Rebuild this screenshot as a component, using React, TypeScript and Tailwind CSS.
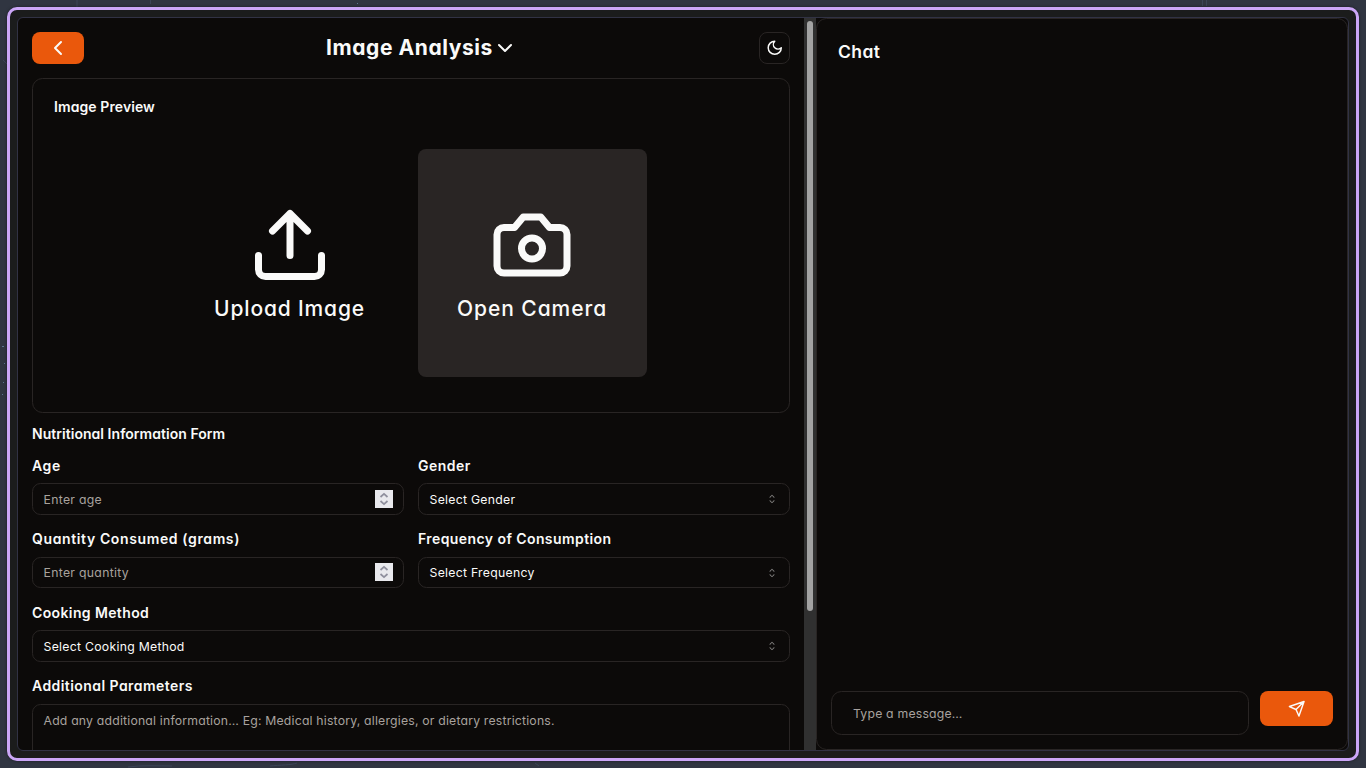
import type { ReactNode } from "react";
import { ChevronDown, ChevronLeft } from "lucide-react";
import { RxCaretSort } from "react-icons/rx";

function Wallpaper() {
  return (
    <svg className="absolute inset-0 h-full w-full" viewBox="0 0 1366 768" fill="none" aria-hidden="true">
      <g stroke="#3c4457" strokeWidth="1">
        <path d="M77 0v7M150.500 0v4M1202.500 0v6M1206.500 0v6M3 60l4 4" />
        <path d="M128 767c14-2 30-1 44-1M270 766c10-1 22-1 27-3M535 763l4 3" />
      </g>
      <g fill="#5b7590">
        <rect x="2" y="346" width="2" height="1" />
        <rect x="4" y="363" width="1" height="1" />
        <rect x="3" y="382" width="1" height="1" />
        <rect x="2" y="394" width="1" height="1" />
        <rect x="357" y="3" width="1" height="1" />
      </g>
    </svg>
  );
}

function Field({ label, spacing, children }: { label: string; spacing: string; children: ReactNode }) {
  return (
    <div className="flex flex-col">
      <span className={`mb-[7.55px] pt-[0.45px] text-[14px] leading-[20px] font-semibold whitespace-nowrap ${spacing}`}>{label}</span>
      {children}
    </div>
  );
}

function NumberInput({ placeholder }: { placeholder: string }) {
  return (
    <div className="flex h-[31.5px] items-center justify-between rounded-[8.5px] border border-[#292524] pr-[10px] pl-[10.5px] text-[12.25px]">
      <span className="pt-[2.3px] tracking-[0.3px] text-[#a8a29e]">{placeholder}</span>
      <span className="flex h-[18px] w-[18px] items-center justify-center bg-[#e9e9ed]">
        <svg width="18" height="18" viewBox="0 0 18 18" fill="none" stroke="#8f8f9d" strokeWidth="1.700">
          <path d="M5.500 7 9 3.900 12.500 7M5.500 11 9 14.100 12.500 11" />
        </svg>
      </span>
    </div>
  );
}

function SelectInput({ value }: { value: string }) {
  return (
    <div className="flex h-[31.5px] items-center justify-between rounded-[8.5px] border border-[#292524] px-[10.5px] text-[12.25px]">
      <span className="pt-[2.3px] tracking-[0.27px]">{value}</span>
      <RxCaretSort className="mt-[0.6px] size-[14px] opacity-50" />
    </div>
  );
}

export default function App() {
  return (
    <div className="relative h-[768px] w-[1366px] overflow-hidden bg-[#303541] pt-[7px] pl-[7px] font-[Inter,sans-serif] text-[#fafaf9] [font-feature-settings:'cv11']">
      <Wallpaper />
      <div className="relative h-[754px] w-[1352px] rounded-[10px] border-[3px] border-[#cba6f7] bg-[#1b1c1c] p-[7px] shadow-[0_0_3px_rgba(0,0,0,0.5)]">
        <div className="flex h-full w-full overflow-hidden rounded-[6px] border border-[#313244] bg-[#0c0a09]">
          <main className="h-full w-[786px] overflow-hidden p-[14px]">
            <header className="flex h-8 items-center justify-between">
              <button className="flex h-8 w-[52px] items-center justify-center rounded-[8px] bg-[#ea580c]">
                <ChevronLeft className="size-6" />
              </button>
              <div className="flex items-center">
                <h1 className="text-[21px] leading-8 font-bold tracking-[0.58px]">Image Analysis</h1>
                <ChevronDown className="size-6" />
              </div>
              <button className="flex h-8 w-[31px] items-center justify-center rounded-[8px] border border-[#292524] pb-[1px]">
                <svg className="size-[17.5px]" viewBox="0 0 24 24" fill="none" stroke="currentColor" strokeWidth="2" strokeLinecap="round" strokeLinejoin="round">
                  <path d="M12 3a6 6 0 0 0 9 9 9 9 0 1 1-9-9Z" />
                </svg>
              </button>
            </header>

            <section className="mt-[14px] h-[334.5px] rounded-[10.5px] border border-[#292524] px-[21px] pt-[21px]">
              <h2 className="text-[14px] leading-[14px] font-semibold tracking-[0.09px]">Image Preview</h2>
              <div className="mt-[35px] flex justify-center gap-[14px]">
                <button className="flex h-[228px] w-[228px] flex-col items-center rounded-[8px] pt-[54px]">
                  <svg className="size-[84px]" viewBox="0 0 24 24" fill="none" stroke="currentColor" strokeWidth="2" strokeLinecap="round" strokeLinejoin="round">
                    <path d="M21 15v4a2 2 0 0 1-2 2H5a2 2 0 0 1-2-2v-4M17 8l-5-5-5 5M12 3v12" />
                  </svg>
                  <span className="mt-[6px] text-[21px] leading-[31px] font-medium tracking-[0.85px]">Upload Image</span>
                </button>
                <button className="flex h-[228px] w-[229px] flex-col items-center rounded-[8px] bg-[#292524] pt-[54px]">
                  <svg className="size-[84px]" viewBox="0 0 24 24" fill="none" stroke="currentColor" strokeWidth="2" strokeLinecap="round" strokeLinejoin="round">
                    <path d="M14.500 4h-5L7 7H4a2 2 0 0 0-2 2v9a2 2 0 0 0 2 2h16a2 2 0 0 0 2-2V9a2 2 0 0 0-2-2h-3l-2.500-3z" />
                    <circle cx="12" cy="13" r="3" />
                  </svg>
                  <span className="mt-[6px] text-[21px] leading-[31px] font-medium tracking-[0.95px]">Open Camera</span>
                </button>
              </div>
            </section>

            <h2 className="mt-[14px] text-[14px] leading-[14px] font-semibold tracking-[0.04px]">Nutritional Information Form</h2>
            <form className="mt-[14.6px] grid grid-cols-2 gap-[14px]">
              <Field label="Age" spacing="tracking-[0.6px]">
                <NumberInput placeholder="Enter age" />
              </Field>
              <Field label="Gender" spacing="tracking-[0.5px]">
                <SelectInput value="Select Gender" />
              </Field>
              <Field label="Quantity Consumed (grams)" spacing="tracking-[0.62px]">
                <NumberInput placeholder="Enter quantity" />
              </Field>
              <Field label="Frequency of Consumption" spacing="tracking-[0.42px]">
                <SelectInput value="Select Frequency" />
              </Field>
              <div className="col-span-2">
                <Field label="Cooking Method" spacing="tracking-[0.38px]">
                  <SelectInput value="Select Cooking Method" />
                </Field>
              </div>
              <div className="col-span-2">
                <Field label="Additional Parameters" spacing="tracking-[0.44px]">
                  <div className="h-[120px] rounded-[8.5px] border border-[#292524] px-[10.5px] pt-[7.4px] text-[12.25px] leading-[17.5px] tracking-[0.19px] text-[#a8a29e]">
                    Add any additional information… Eg: Medical history, allergies, or dietary restrictions.
                  </div>
                </Field>
              </div>
            </form>
          </main>

          <div className="flex h-full w-3 justify-center bg-[#303030] pt-[3px]">
            <div className="h-[590px] w-[6px] rounded-full bg-[#a3a3a3]" />
          </div>

          <aside className="flex h-full w-[532px] flex-col justify-between rounded-[10.5px] border border-[#292524] pt-[21px] pr-[14px] pb-[14px] pl-[14px]">
            <h2 className="pl-[7px] text-[17.5px] leading-[24px] font-semibold tracking-[0.4px]">Chat</h2>
            <div className="flex gap-[11px]">
              <div className="flex h-[44px] w-[418px] items-center rounded-[10.5px] border border-[#292524] px-[21px] pt-[2px] text-[12.25px] tracking-[0.2px] text-[#a8a29e]">
                Type a message…
              </div>
              <button className="flex h-[35px] w-[73px] items-center justify-center rounded-[8px] bg-[#ea580c]">
                <svg className="size-[17.5px]" viewBox="0 0 24 24" fill="none" stroke="currentColor" strokeWidth="2" strokeLinecap="round" strokeLinejoin="round">
                  <path d="m22 2-7 20-4-9-9-4ZM22 2 11 13" />
                </svg>
              </button>
            </div>
          </aside>
        </div>
      </div>
    </div>
  );
}
